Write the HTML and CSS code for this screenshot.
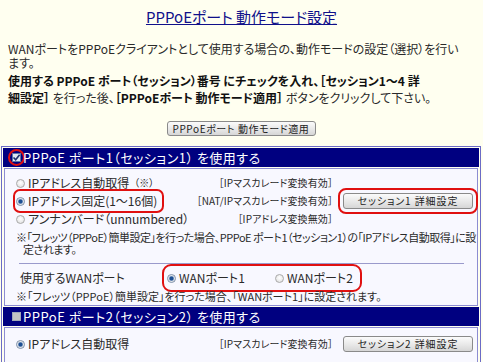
FILE: index.html
```html
<!DOCTYPE html>
<html lang="ja">
<head>
<meta charset="utf-8">
<title>PPPoEポート 動作モード設定</title>
<link rel="stylesheet" href="styles.css">
</head>
<body>
<h1 class="title"><a href="#">PPPoEポート 動作モード設定</a></h1>
<p class="intro">WANポートをPPPoEクライアントとして使用する場合の、動作モードの設定（選択）を行い<br>ます。</p>
<p class="instr"><b>使用する PPPoE ポート（セッション）番号 にチェックを入れ、［セッション1～4 詳<br>細設定］</b> を行った後、<b>［PPPoEポート 動作モード適用］</b> ボタンをクリックして下さい。</p>
<div class="apply"><span class="btn btn-apply">PPPoEポート 動作モード適用</span></div>

<div class="frame">
  <div class="head"><span class="ring"><span class="chk on"><svg viewBox="0 0 9 9" width="9" height="9"><path d="M1.5 4.5 L3.7 6.8 L7.6 1.8" fill="none" stroke="#1c2f6e" stroke-width="1.6"/></svg></span></span>PPPoE ポート1（セッション1） を使用する</div>
  <div class="panel">
    <div class="opt">
      <div class="opt-main"><span class="lbl"><span class="rad"></span>IPアドレス自動取得 <small>（※）</small></span><span class="tag">［IPマスカレード変換有効］</span></div>
      <div class="opt-btn"></div>
    </div>
    <div class="opt">
      <div class="opt-main"><span class="lbl hl pad"><span class="rad on"></span>IPアドレス固定(1～16個)</span><span class="tag">［NAT/IPマスカレード変換有効］</span></div>
      <div class="opt-btn"><span class="btn btn-sess hl">セッション1 詳細設定</span></div>
    </div>
    <div class="opt">
      <div class="opt-main"><span class="lbl"><span class="rad"></span>アンナンバード（unnumbered）</span><span class="tag">［IPアドレス変換無効］</span></div>
      <div class="opt-btn"></div>
    </div>
    <p class="note tight">※「フレッツ（PPPoE）簡単設定」を行った場合、PPPoE ポート1（セッション1）の「IPアドレス自動取得」に設<br>定されます。</p>
    <hr class="sep">
    <div class="wan">
      <span class="wan-lbl">使用するWANポート</span>
      <span class="wan-grp hl"><span class="wan-opt"><span class="rad on"></span>WANポート1</span><span class="wan-opt"><span class="rad"></span>WANポート2</span></span>
    </div>
    <p class="note">※「フレッツ（PPPoE）簡単設定」を行った場合、「WANポート1」に設定されます。</p>
  </div>
  <div class="head"><span class="ring plain"><span class="chk"></span></span>PPPoE ポート2（セッション2） を使用する</div>
  <div class="panel last">
    <div class="opt">
      <div class="opt-main"><span class="lbl"><span class="rad on"></span>IPアドレス自動取得</span><span class="tag">［IPマスカレード変換有効］</span></div>
      <div class="opt-btn"><span class="btn btn-sess">セッション2 詳細設定</span></div>
    </div>
  </div>
</div>
</body>
</html>
```
FILE: styles.css
```css
html { overflow: hidden; }
body {
  margin: 0;
  background: #fffff0;
  font-family: "Noto Sans CJK JP", "Liberation Sans", sans-serif;
  font-feature-settings: "palt";
  font-size: 12px;
  color: #2a2a2a;
}
.title {
  margin: 8px 0 0;
  text-align: center;
  font-size: 15px;
  line-height: 18px;
  font-weight: normal;
}
.title a { color: #10108a; text-decoration: underline; }
.intro {
  margin: 16px 8px 0;
  line-height: 14px;
  white-space: nowrap;
}
.instr {
  margin: 2px 8px 0;
  line-height: 17px;
  white-space: nowrap;
}
.instr b { font-weight: bold; color: #111; }
.apply {
  margin-top: 15px;
  display: flex;
  justify-content: center;
}
.btn {
  display: inline-flex;
  align-items: center;
  justify-content: center;
  box-sizing: border-box;
  height: 15px;
  border: 1px solid #8a8a8a;
  border-radius: 3px;
  background: linear-gradient(#fbfbfb, #e6e6e6 60%, #d6d6d6);
  font-size: 10px;
  color: #222;
  letter-spacing: 0.6px;
  white-space: nowrap;
}
.btn-apply { width: 149px; margin-left: -1px; }
.btn-sess { width: 130px; height: 16px; letter-spacing: 0.9px; }
.frame {
  margin: 10px 0 0 1px;
  width: 480px;
  box-sizing: border-box;
  border: 1px solid #6b6bc6;
  padding: 1px;
}
.head {
  height: 19px;
  line-height: 19px;
  background: #000080;
  color: #fff;
  font-size: 13px;
  letter-spacing: 0.5px;
  padding-left: 9px;
  display: flex;
  align-items: center;
  white-space: nowrap;
}
.ring {
  display: inline-flex;
  margin-right: 2px;
  border-radius: 50%;
  outline: 2px solid #e01010;
  outline-offset: 2px;
}
.ring.plain { outline: none; }
.chk {
  width: 9px;
  height: 9px;
  box-sizing: border-box;
  border: 1px solid #a0a8b8;
  background: #c4c4c4;
  display: inline-flex;
}
.chk.on { background: #dfe6f2; border-color: #5d74a6; }
.chk svg { display: block; margin: -1px; }
.panel {
  margin: 1px 1px 1px;
  border: 1px solid #8c8cd2;
  background: #f8f8ff;
  padding: 5px 0 3px;
}
.panel.last { margin-bottom: 0; padding: 7px 0 20px; }
.opt {
  display: grid;
  grid-template-columns: minmax(0, 1fr) 144px;
  height: 18px;
  line-height: 18px;
}
.opt-main {
  display: flex;
  justify-content: space-between;
  padding-left: 11px;
  white-space: nowrap;
}
.lbl { display: inline-flex; align-items: center; }
.lbl.pad { padding-right: 4px; }
.lbl small { font-size: 10px; margin-left: 5px; }
.tag { font-size: 10px; letter-spacing: 0.1px; }
.opt-btn { display: flex; align-items: center; padding-left: 10px; }
.rad {
  width: 9px;
  height: 9px;
  box-sizing: border-box;
  border-radius: 50%;
  border: 1px solid #a9a9a9;
  background: radial-gradient(circle at 50% 40%, #ffffff, #dcdcdc);
  margin-right: 3px;
  flex: none;
}
.rad.on {
  border-color: #7d8fa8;
  background: radial-gradient(circle, #1d4f94 0, #1d4f94 1.6px, #9fb3cf 2.4px, #f2f2f2 3.2px);
}
.hl {
  outline: 2px solid #e01010;
  outline-offset: 1px;
  border-radius: 4px;
}
.btn-sess.hl { outline-offset: 3px; border-radius: 3px; }
.note {
  margin: 3px 0 0;
  padding-left: 18px;
  text-indent: -7px;
  font-size: 11px;
  line-height: 12px;
  white-space: nowrap;
}
.note.tight { letter-spacing: -0.5px; }
.sep {
  margin: 8px 13px 0 14px;
  border: 0;
  border-top: 1px solid #9a9acc;
  height: 0;
}
.wan {
  margin-top: 5px;
  height: 18px;
  line-height: 18px;
  display: flex;
  align-items: center;
  padding-left: 15px;
  font-size: 12px;
}
.wan-lbl { width: 147px; flex: none; }
.wan-grp {
  display: inline-flex;
  outline-offset: 3px;
  padding-right: 4px;
}
.wan-opt { display: inline-flex; align-items: center; width: 108px; }
.wan-opt + .wan-opt { width: auto; }
```
